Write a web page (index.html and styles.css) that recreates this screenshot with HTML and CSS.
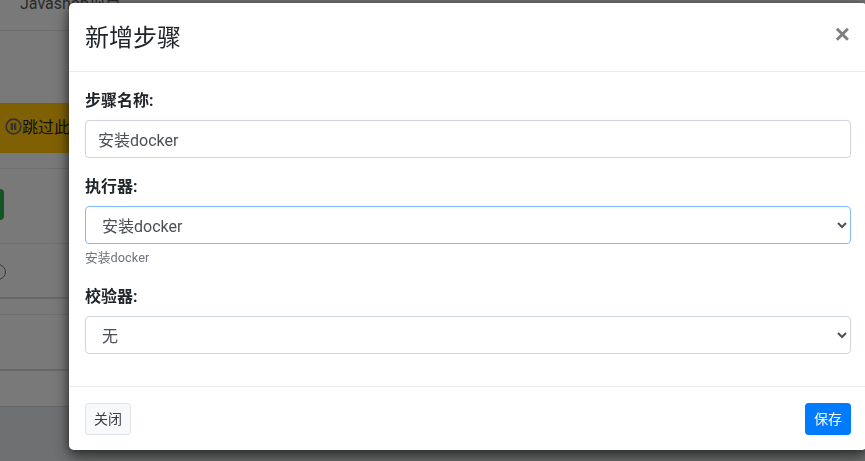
FILE: index.html
```html
<!DOCTYPE html>
<html lang="zh-CN">
<head>
    <meta charset="UTF-8">
    <meta name="viewport" content="width=device-width, initial-scale=1.0">
    <title>新增步骤</title>
    <link rel="stylesheet" href="styles.css">
</head>
<body>
    <div class="page">
        <div class="nav"><span class="nav-title">Javashop项目</span></div>
        <div class="spacer"></div>
        <div class="warning">
            <svg class="pause" viewBox="0 0 16 16" width="17" height="17">
                <circle cx="8" cy="8" r="6.9" fill="none" stroke="#666" stroke-width="1.6"/>
                <rect x="5.3" y="4.8" width="2.3" height="6.4" fill="#666"/>
                <rect x="8.4" y="4.8" width="2.3" height="6.4" fill="#666"/>
            </svg>
            <span>跳过此步骤</span>
        </div>
        <div class="row row-gap"></div>
        <div class="row row-action"><span class="run-btn"></span></div>
        <div class="row row-status"><span class="status-dot"></span></div>
        <div class="row row-thin"></div>
        <div class="row row-mid"></div>
        <div class="row row-last"></div>
    </div>

    <div class="backdrop"></div>

    <div class="modal">
        <div class="modal-header">
            <h5 class="modal-title">新增步骤</h5>
            <span class="close">&times;</span>
        </div>
        <div class="modal-body">
            <div class="form-group">
                <label for="stepName">步骤名称:</label>
                <input type="text" id="stepName" class="form-control" value="安装docker">
            </div>
            <div class="form-group">
                <label for="runner">执行器:</label>
                <select id="runner" class="form-control focused">
                    <option>安装docker</option>
                </select>
                <small class="hint">安装docker</small>
            </div>
            <div class="form-group">
                <label for="checker">校验器:</label>
                <select id="checker" class="form-control">
                    <option>无</option>
                </select>
            </div>
        </div>
        <div class="modal-footer">
            <button class="btn btn-light">关闭</button>
            <button class="btn btn-primary">保存</button>
        </div>
    </div>
</body>
</html>
```

FILE: styles.css
```css
/* Base */
html, body {
    height: 100%;
}

body {
    margin: 0;
    overflow: hidden;
    font-family: Roboto, "Noto Sans CJK SC", sans-serif;
    font-size: 16px;
    line-height: 1.5;
    color: #212529;
    background-color: #dfe1e3;
}

/* Page behind the dialog */
.page {
    display: flex;
    flex-direction: column;
}

.nav {
    height: 30px;
    padding-left: 20px;
    overflow: hidden;
    background-color: #f2f2f2;
    border-bottom: 1px solid #dcdcdc;
}

.nav-title {
    display: block;
    margin-top: -8px;
    color: #555;
}

.spacer {
    height: 72px;
    background-color: #f2f2f2;
}

.warning {
    display: flex;
    align-items: center;
    height: 50px;
    padding-left: 5px;
    white-space: nowrap;
    background-color: #ffc107;
}

.pause {
    flex: none;
    margin-bottom: 3px;
}

.row {
    background-color: #f2f2f2;
    border-bottom: 1px solid #dedede;
}

.row-gap {
    height: 15px;
}

.row-action {
    height: 74px;
}

.run-btn {
    display: block;
    width: 60px;
    height: 31px;
    margin: 20px 0 0 -56px;
    background-color: #28a745;
    border-radius: 4px;
}

.row-status {
    height: 53px;
    border-bottom: 2px solid #d0d0d0;
}

.status-dot {
    display: block;
    box-sizing: border-box;
    width: 16px;
    height: 16px;
    margin: 20px 0 0 -10px;
    border: 1.5px solid #777;
    border-radius: 50%;
}

.row-thin {
    height: 15px;
}

.row-mid {
    height: 54px;
    border-bottom: 2px solid #d0d0d0;
}

.row-last {
    height: 35px;
    border-bottom: 1px solid #d0d0d0;
}

.backdrop {
    position: fixed;
    top: 0;
    left: 0;
    width: 100%;
    height: 100%;
    background-color: #000;
    opacity: 0.5;
}

/* Dialog */
.modal {
    position: fixed;
    top: 3px;
    left: 69px;
    box-sizing: border-box;
    width: 798px;
    background-color: #fff;
    border-radius: 4.8px;
    box-shadow: 0 8px 16px rgba(0, 0, 0, 0.5), 0 0 8px rgba(0, 0, 0, 0.4);
}

.modal-header {
    display: flex;
    align-items: flex-start;
    justify-content: space-between;
    padding: 17px 16px 15px;
    border-bottom: 1px solid #e9ecef;
}

.modal-title {
    margin: 0;
    font-size: 24px;
    font-weight: 400;
    line-height: 1.5;
}

.close {
    margin-top: -1px;
    margin-right: 1px;
    font-family: "Liberation Sans", sans-serif;
    font-size: 26px;
    font-weight: 700;
    line-height: 30px;
    color: #7f7f7f;
}

.modal-body {
    padding: 16px 16px 0;
}

.form-group {
    margin-bottom: 16px;
}

label {
    display: block;
    padding-top: 1px;
    margin-bottom: 7px;
    font-weight: 700;
}

.form-control {
    display: block;
    box-sizing: border-box;
    width: 100%;
    height: 38px;
    padding: 6px 12px;
    font-family: inherit;
    font-size: 16px;
    line-height: 1.5;
    color: #495057;
    background-color: #fff;
    border: 1px solid #ced4da;
    border-radius: 4px;
}

select.form-control {
    padding-top: 8px;
    padding-bottom: 6px;
}

.focused {
    border-color: #80bdff;
}

.hint {
    display: block;
    margin-top: 4px;
    padding-bottom: 1px;
    font-size: 12.8px;
    color: #6c757d;
}

.modal-footer {
    display: flex;
    justify-content: space-between;
    margin-top: 32px;
    padding: 16px 16px 15px;
    border-top: 1px solid #e9ecef;
}

.btn {
    height: 32px;
    padding: 0 8px;
    font-family: inherit;
    font-size: 14px;
    line-height: 1.5;
    border: 1px solid transparent;
    border-radius: 3.2px;
}

.btn-light {
    color: #3a3f44;
    background-color: #f8f9fa;
    border-color: #dee2e6;
}

.btn-primary {
    color: #fff;
    background-color: #007bff;
    border-color: #007bff;
}
```
